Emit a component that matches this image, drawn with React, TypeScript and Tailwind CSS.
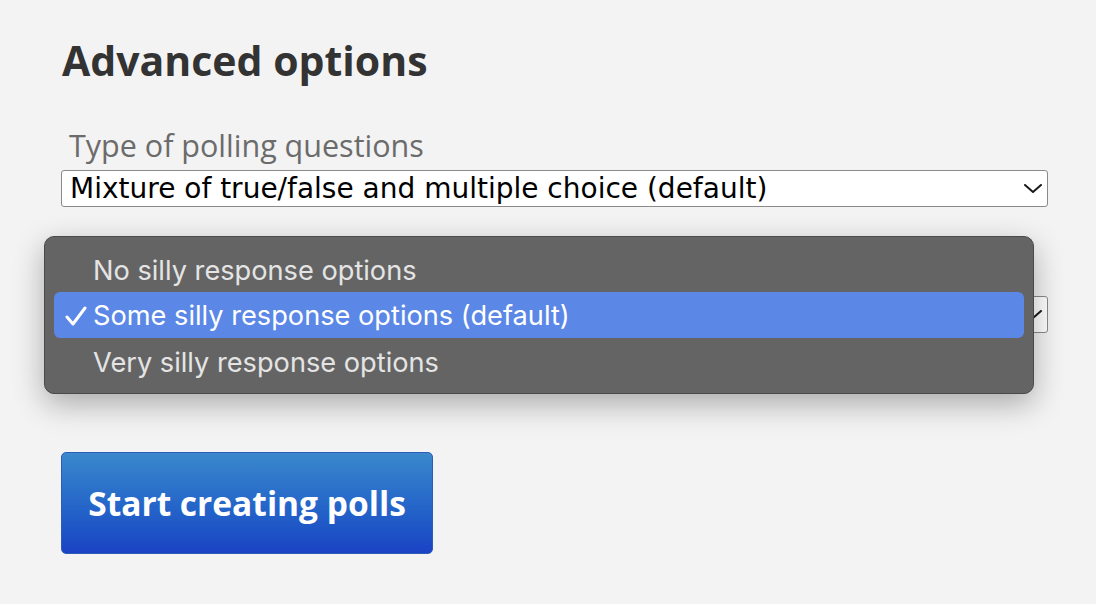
import React from "react";

function Chevron() {
  return (
    <svg width="18" height="9" viewBox="0 0 18 9" fill="none">
      <path d="M1 1 L9 8 L17 1" stroke="#1a1a1a" strokeWidth="2" strokeLinecap="round" strokeLinejoin="round" />
    </svg>
  );
}

function Check() {
  return (
    <svg width="22" height="20" viewBox="0 0 22 20" fill="none">
      <path d="M2 11 L8 18 L20 2" stroke="#ffffff" strokeWidth="3" strokeLinecap="round" strokeLinejoin="round" />
    </svg>
  );
}

export default function App() {
  const font = { fontFamily: '"Open Sans", "DejaVu Sans", sans-serif' };
  const dejavu = { fontFamily: '"DejaVu Sans", "Open Sans", sans-serif' };
  const mac = { fontFamily: 'Inter, "Noto Sans", sans-serif' };
  return (
    <div className="relative w-[1096px] h-[604px] bg-[#f3f3f3] overflow-hidden" style={font}>
      <div className="pl-[61px] pr-[48px]">
        <h2 className="pt-[40px] pl-[1px] text-[41px] leading-[40px] font-bold text-[#333333]">Advanced options</h2>
        <div className="mt-[50px] pl-[8px] text-[30.5px] leading-[30px] text-[#6b6b6b]">Type of polling questions</div>
        <div className="mt-[10px] h-[37px] flex items-center justify-between bg-white border border-[#8a8a8a] rounded-[3px] pl-[8px] pr-[5px]">
          <span className="text-[28px] leading-[28px] pt-[1px] text-black" style={dejavu}>Mixture of true/false and multiple choice (default)</span>
          <Chevron />
        </div>
        <div className="mt-[89px] h-[37px] flex items-center justify-end bg-white border border-[#8a8a8a] rounded-[3px] pl-[8px] pr-[5px]">
          <Chevron />
        </div>
        <button className="mt-[119px] w-[372px] h-[102px] rounded-[5px] bg-gradient-to-b from-[#3b88cc] to-[#1b42c4] border border-[#2a5cb8] text-white text-[33.5px] font-bold flex items-center justify-center">
          Start creating polls
        </button>
      </div>

      <div
        className="absolute left-[44px] top-[236px] w-[990px] h-[158px] bg-[#646464] border border-[#4a4a4a] rounded-[10px] px-[9px] pt-[11px] pb-[7px] shadow-[0_10px_30px_rgba(0,0,0,0.3)]"
        style={mac}
      >
        <div className="h-[46px] -mb-[2px] flex items-center pl-[39px] text-[27.2px] text-[#e4e4e4]">No silly response options</div>
        <div className="h-[46px] flex items-center bg-[#5b87e6] rounded-[6px] text-[27.2px] text-white pt-[2px]">
          <div className="w-[39px] flex justify-end pr-[6px]"><Check /></div>
          <span>Some silly response options (default)</span>
        </div>
        <div className="h-[46px] pt-[4px] flex items-center pl-[39px] text-[27.2px] text-[#e4e4e4]">Very silly response options</div>
      </div>
    </div>
  );
}
